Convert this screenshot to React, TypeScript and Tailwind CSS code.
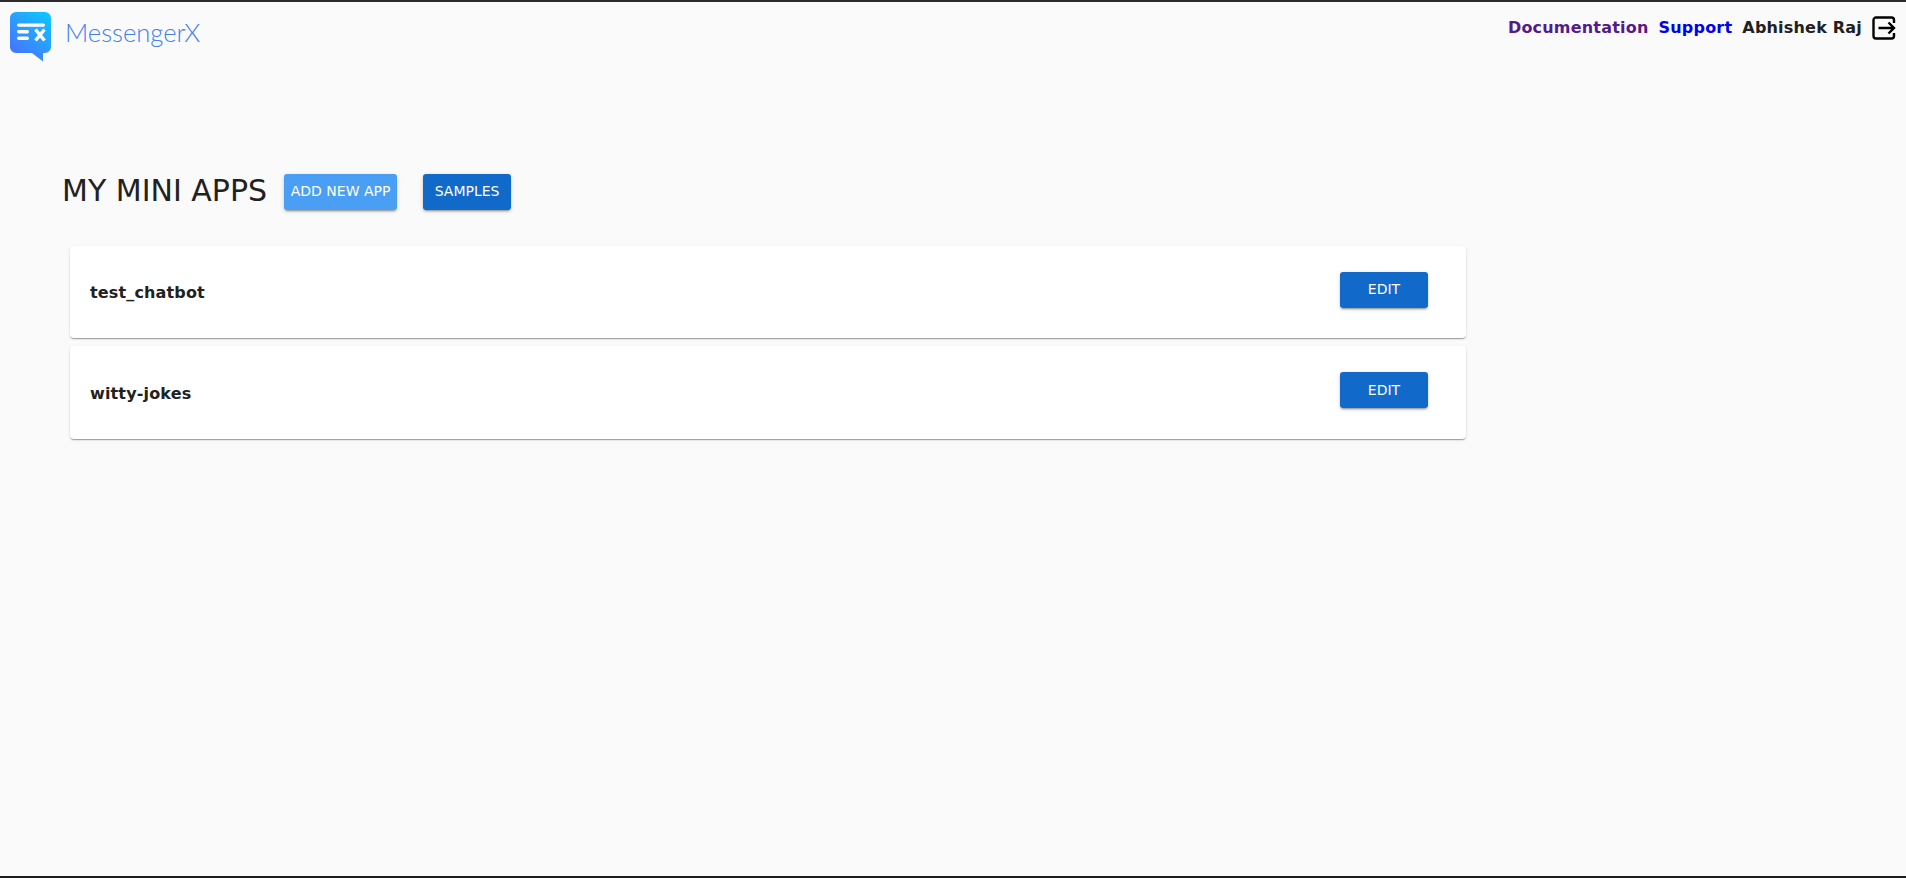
const sans = "font-['DejaVu_Sans',sans-serif]"
const raised = 'shadow-[0_3px_1px_-2px_rgba(0,0,0,0.2),0_2px_2px_0_rgba(0,0,0,0.14),0_1px_5px_0_rgba(0,0,0,0.12)]'

function Logo() {
  return (
    <svg width="41" height="50" viewBox="0 0 41 50" className="shrink-0">
      <defs>
        <linearGradient id="logoGrad" x1="0.85" y1="0" x2="0.15" y2="1">
          <stop offset="0" stopColor="#0fc4ff" />
          <stop offset="1" stopColor="#4a6dff" />
        </linearGradient>
      </defs>
      <path
        d="M6 0H35a6 6 0 0 1 6 6V35a6 6 0 0 1 -6 6H33V49.5L22 41H6a6 6 0 0 1 -6 -6V6a6 6 0 0 1 6 -6Z"
        fill="url(#logoGrad)"
      />
      <rect x="7" y="11.5" width="28" height="3.2" rx="1.6" fill="#fff" />
      <rect x="7" y="18" width="12" height="3.4" rx="1.7" fill="#fff" />
      <rect x="7" y="24.5" width="12" height="3.4" rx="1.7" fill="#fff" />
      <path d="M25.5 17.5L34.5 28.5M34.5 17.5L25.5 28.5" stroke="#fff" strokeWidth="3.4" />
    </svg>
  )
}

function ExitIcon() {
  return (
    <svg width="24" height="24" viewBox="0 0 24 24" fill="none" stroke="#000" strokeWidth="2.4" className="shrink-0">
      <path d="M22 7V4a2.5 2.5 0 0 0 -2.5 -2.5H4A2.5 2.5 0 0 0 1.5 4V20A2.5 2.5 0 0 0 4 22.5H19.5A2.5 2.5 0 0 0 22 20V17" />
      <path d="M6.5 12H22M16.5 6.5L22 12L16.5 17.5" />
    </svg>
  )
}

function AppCard({ name }: { name: string }) {
  return (
    <div className="flex h-[92.4px] items-center justify-between rounded-[4px] bg-white pl-5 pr-[38px] shadow-[0_2px_1px_-1px_rgba(0,0,0,0.2),0_1px_1px_0_rgba(0,0,0,0.14),0_1px_3px_0_rgba(0,0,0,0.12)]">
      <span className="mt-[2px] text-[16px] font-bold tracking-[0.15px] text-[#212121]">{name}</span>
      <button className={`-mt-[5px] h-9 w-[88px] rounded-[3px] bg-[#1169c9] text-[14px] text-white ${raised}`}>
        EDIT
      </button>
    </div>
  )
}

export default function App() {
  return (
    <div className={`${sans} flex h-[878px] flex-col overflow-hidden border-y-2 border-t-[#2b2b2b] border-b-[#1c1c1c] bg-[#fafafa] text-[#212121]`}>
      <header className="flex items-start justify-between pl-[10px] pr-[10px] pt-[10px]">
        <div className="flex items-center gap-[14px]">
          <Logo />
          <span className="-mt-[10px] font-['Lato',sans-serif] text-[25.6px] font-light text-[#3f80f5]">MessengerX</span>
        </div>
        <div className="flex items-center gap-[10px] pt-[4px] text-[16px] font-bold tracking-[0.2px]">
          <a className="text-[#551a8b]">Documentation</a>
          <a className="text-[#0000ee]">Support</a>
          <span>Abhishek Raj</span>
          <ExitIcon />
        </div>
      </header>

      <main className="pl-[62px] pt-[112px]">
        <div className="flex items-center">
          <h1 className="-mt-[2px] text-[30px] leading-9">MY MINI APPS</h1>
          <button className={`ml-[17px] h-9 w-[113px] rounded-[3px] bg-[#4a9ff5] pb-[2px] text-[14px] text-white ${raised}`}>
            ADD NEW APP
          </button>
          <button className={`ml-[26px] h-9 w-[88px] rounded-[3px] bg-[#1169c9] pb-[2px] text-[14px] text-white ${raised}`}>
            SAMPLES
          </button>
        </div>
        <div className="ml-2 mt-9 flex w-[1396px] flex-col gap-2">
          <AppCard name="test_chatbot" />
          <AppCard name="witty-jokes" />
        </div>
      </main>
    </div>
  )
}
